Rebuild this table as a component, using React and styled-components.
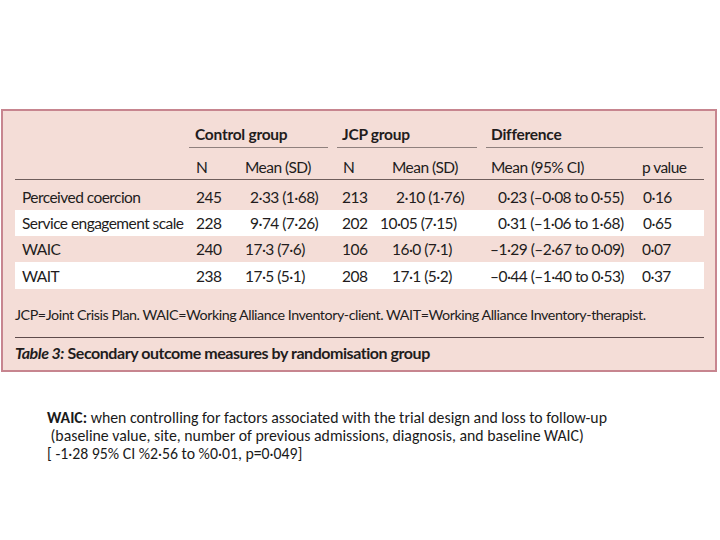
import React from "react";
import styled, { createGlobalStyle } from "styled-components";

const GlobalStyle = createGlobalStyle`
  html, body { margin: 0; padding: 0; background: #ffffff; }
  body { width: 720px; height: 540px; overflow: hidden; }
`;

const TABLE_FONT = `Lato, "DejaVu Sans Condensed", "Liberation Sans", sans-serif`;
const COLS = "181px 49px 97px 50px 98px 152px 62px";

const Page = styled.div`
  padding: 109px 0 0 1px;
`;

const TableBox = styled.section`
  box-sizing: border-box;
  width: 716px;
  border: 2px solid #c7858f;
  background: #f4ddd7;
  padding: 0 11px 7px 12px;
  color: #221c1c;
  font-family: ${TABLE_FONT};
  font-size: 15.5px;
  letter-spacing: -0.55px;
  line-height: 20px;
`;

const GroupRow = styled.div`
  display: flex;
  gap: 9px;
  padding-left: 174px;
`;

const Group = styled.div`
  width: ${(p) => p.$w}px;
  padding: 13px 0 3px ${(p) => p.$pad}px;
  box-sizing: border-box;
  border-bottom: 1px solid #8f807d;
  font-weight: bold;
  font-size: 15.5px;
  letter-spacing: -0.25px;
`;

const Row = styled.div`
  display: grid;
  grid-template-columns: ${COLS};
  align-items: center;
  height: ${(p) => p.$h || 26}px;
  background: ${(p) => (p.$white ? "#ffffff" : "transparent")};
`;

const HeadRow = styled(Row)`
  height: auto;
  padding: 9px 0 2px;
  border-bottom: 1px solid #6e5d5b;
  margin-bottom: 4px;
`;

const Cell = styled.div`
  white-space: nowrap;
  text-indent: ${(p) => p.$shift || 0}px;
`;

const Label = styled(Cell)`
  padding-left: 7px;
`;

const Footnote = styled.p`
  margin: 16px 0 0;
  padding-bottom: 12px;
  border-bottom: 1px solid #5e4b4b;
  font-size: 14.3px;
  letter-spacing: -0.45px;
  white-space: nowrap;
`;

const Caption = styled.p`
  margin: 0;
  padding-top: 5px;
  font-weight: bold;
  font-size: 16px;
  letter-spacing: -0.45px;
  white-space: nowrap;
  em { font-style: italic; }
`;

const Note = styled.div`
  margin: 37px 0 0 46px;
  font-family: "Carlito", Lato, "Liberation Sans", sans-serif;
  font-size: 15.8px;
  line-height: 18px;
  color: #1a1a1a;
  white-space: pre;
  b { font-weight: bold; }
`;

const rows = [
  { label: "Perceived coercion", cells: ["245", "2·33 (1·68)", "213", "2·10 (1·76)", "0·23 (–0·08 to 0·55)", "0·16"], shifts: [0, 5, 0, 4, 8, 1] },
  { label: "Service engagement scale", white: true, cells: ["228", "9·74 (7·26)", "202", "10·05 (7·15)", "0·31 (–1·06 to 1·68)", "0·65"], shifts: [0, 5, 0, -12, 8, 1] },
  { label: "WAIC", cells: ["240", "17·3 (7·6)", "106", "16·0 (7·1)", "–1·29 (–2·67 to 0·09)", "0·07"], shifts: [0, 0, 0, 0, 0, 0] },
  { label: "WAIT", white: true, h: 27, cells: ["238", "17·5 (5·1)", "208", "17·1 (5·2)", "–0·44 (–1·40 to 0·53)", "0·37"], shifts: [0, 0, 0, 0, 0, 0] },
];

export default function App() {
  return (
    <>
      <GlobalStyle />
      <Page>
        <TableBox>
          <GroupRow>
            <Group $w={139} $pad={6}>Control group</Group>
            <Group $w={140} $pad={5}>JCP group</Group>
            <Group $w={217} $pad={5}>Difference</Group>
          </GroupRow>
          <HeadRow>
            <Cell />
            <Cell>N</Cell>
            <Cell>Mean (SD)</Cell>
            <Cell $shift={1}>N</Cell>
            <Cell>Mean (SD)</Cell>
            <Cell $shift={1}>Mean (95% CI)</Cell>
            <Cell>p value</Cell>
          </HeadRow>
          {rows.map((r) => (
            <Row key={r.label} $white={r.white} $h={r.h}>
              <Label>{r.label}</Label>
              {r.cells.map((c, i) => (
                <Cell key={i} $shift={r.shifts[i]}>{c}</Cell>
              ))}
            </Row>
          ))}
          <Footnote>
            JCP=Joint Crisis Plan. WAIC=Working Alliance Inventory-client. WAIT=Working Alliance Inventory-therapist.
          </Footnote>
          <Caption>
            <em>Table 3:</em> Secondary outcome measures by randomisation group
          </Caption>
        </TableBox>
        <Note>
          <b>WAIC:</b>{" when controlling for factors associated with the trial design and loss to follow-up\n (baseline value, site, number of previous admissions, diagnosis, and baseline WAIC)\n[ -1·28 95% CI %2·56 to %0·01, p=0·049]"}
        </Note>
      </Page>
    </>
  );
}
